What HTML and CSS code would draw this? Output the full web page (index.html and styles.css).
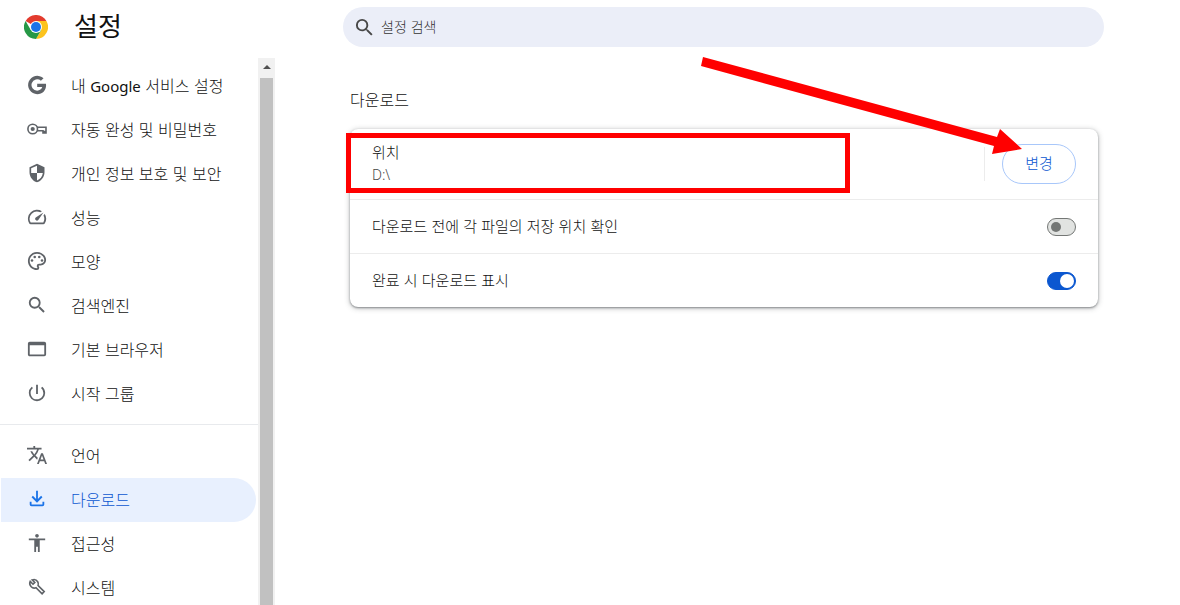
FILE: index.html
```html
<!DOCTYPE html>
<html lang="ko">
<head>
<meta charset="utf-8">
<title>설정</title>
<link rel="stylesheet" href="styles.css">
</head>
<body>
<div class="app">
  <aside class="sidebar">
    <header class="brand">
      <svg class="brand-logo" viewBox="0 0 48 48" aria-hidden="true">
        <path fill="#e33b2e" d="M24 24 3.2 12A24 24 0 0 1 44.8 12Z"/>
        <path fill="#fcc31e" d="M24 12H44.8A24 24 0 0 1 24 48L34.4 30Z"/>
        <path fill="#269846" d="M13.6 30 3.2 12A24 24 0 0 0 24 48L34.4 30Z"/>
        <circle cx="24" cy="24" r="12" fill="#fff"/>
        <circle cx="24" cy="24" r="10" fill="#1a73e8"/>
      </svg>
      <h1 class="brand-title">설정</h1>
    </header>
    <div class="menu-area">
      <nav class="menu">
        <a class="menu-item" href="#"><svg class="icon" viewBox="1 1 22 22"><path d="M21.8 10.5H12.2v3.8h5.6c-.7 2.4-2.8 3.9-5.6 3.9a6.2 6.2 0 1 1 4.1-10.800l2.900-2.800A10.1 10.1 0 1 0 12.2 22.1c5.8 0 9.8-4.1 9.8-9.8 0-.6-.1-1.2-.2-1.8z"/></svg><span>내 <span class="latin">Google</span> 서비스 설정</span></a>
        <a class="menu-item" href="#"><svg class="icon icon-outline" viewBox="0 0 20 20"><circle cx="5.7" cy="10" r="4.8"/><path d="M10 8.2H19V14H16V11.8H10M17.5 11.800V14"/><circle class="dot" cx="5.7" cy="10" r="2.100"/></svg><span>자동 완성 및 비밀번호</span></a>
        <a class="menu-item" href="#"><svg class="icon" viewBox="0 0 24 24"><path d="M12 1L3 5v6c0 5.55 3.84 10.74 9 12 5.16-1.26 9-6.45 9-12V5l-9-4zm0 10.99h7c-.53 4.12-3.28 7.79-7 8.94V12H5V6.3l7-3.11v8.8z"/></svg><span>개인 정보 보호 및 보안</span></a>
        <a class="menu-item" href="#"><svg class="icon" viewBox="1 1 22 22"><path d="M20.38 8.57l-1.23 1.85a8 8 0 0 1-.22 7.58H5.07A8 8 0 0 1 15.58 6.85l1.85-1.23A10 10 0 0 0 3.35 19a2 2 0 0 0 1.72 1h13.85a2 2 0 0 0 1.74-1 10 10 0 0 0-.27-10.44zm-9.79 6.84a2 2 0 0 0 2.83 0l5.66-8.49-8.49 5.66a2 2 0 0 0 0 2.83z"/></svg><span>성능</span></a>
        <a class="menu-item" href="#"><svg class="icon" viewBox="1 1 22 22"><path d="M12 22C6.49 22 2 17.51 2 12S6.49 2 12 2s10 4.04 10 9c0 3.31-2.69 6-6 6h-1.77c-.28 0-.5.22-.5.5 0 .12.05.23.13.33.41.47.64 1.06.64 1.67A2.5 2.5 0 0 1 12 22zm0-18c-4.41 0-8 3.59-8 8s3.59 8 8 8c.28 0 .5-.22.5-.5a.54.54 0 0 0-.14-.35c-.41-.46-.63-1.05-.63-1.65a2.5 2.5 0 0 1 2.5-2.5H16c2.21 0 4-1.79 4-4 0-3.86-3.59-7-8-7z"/><circle cx="6.5" cy="11.5" r="1.4"/><circle cx="9.5" cy="7.5" r="1.4"/><circle cx="14.5" cy="7.5" r="1.4"/><circle cx="17.5" cy="11.5" r="1.4"/></svg><span>모양</span></a>
        <a class="menu-item" href="#"><svg class="icon" viewBox="1 1 22 22"><path d="M15.5 14h-.79l-.28-.27A6.47 6.47 0 0 0 16 9.5 6.5 6.5 0 1 0 9.5 16c1.61 0 3.09-.59 4.23-1.57l.27.28v.79l5 4.99L20.49 19l-4.99-5zm-6 0C7.01 14 5 11.99 5 9.5S7.01 5 9.5 5 14 7.01 14 9.5 11.99 14 9.5 14z"/></svg><span>검색엔진</span></a>
        <a class="menu-item" href="#"><svg class="icon" viewBox="1 1 22 22"><path d="M20 4H4a2 2 0 0 0-2 2v12c0 1.1.9 2 2 2h16a2 2 0 0 0 2-2V6a2 2 0 0 0-2-2zm0 14H4V8h16v10z"/></svg><span>기본 브라우저</span></a>
        <a class="menu-item" href="#"><svg class="icon" viewBox="1 1 22 22"><path d="M13 3h-2v10h2V3zm4.83 2.17l-1.42 1.42A6.92 6.92 0 0 1 19 12c0 3.87-3.13 7-7 7A6.995 6.995 0 0 1 7.58 6.58L6.17 5.17A8.932 8.932 0 0 0 3 12a9 9 0 0 0 18 0c0-2.74-1.23-5.18-3.17-6.83z"/></svg><span>시작 그룹</span></a>
        <hr class="menu-divider">
        <a class="menu-item" href="#"><svg class="icon" viewBox="1 1 22 22"><path d="M12.87 15.07l-2.54-2.51.03-.03A17.52 17.52 0 0 0 14.07 6H17V4h-7V2H8v2H1v1.99h11.17C11.5 7.92 10.44 9.75 9 11.35 8.07 10.32 7.3 9.19 6.69 8h-2c.73 1.63 1.73 3.17 2.98 4.56l-5.09 5.02L4 19l5-5 3.11 3.11.76-2.04zM18.5 10h-2L12 22h2l1.12-3h4.75L21 22h2l-4.5-12zm-2.62 7l1.62-4.33L19.12 17h-3.24z"/></svg><span>언어</span></a>
        <a class="menu-item selected" href="#" aria-current="page"><svg class="icon" viewBox="1 1 22 22"><path d="M11 3h2v9l3.5-3.5L18 10l-6 6-6-6 1.5-1.5L11 12zM4 15h2v3h12v-3h2v3a2 2 0 0 1-2 2H6a2 2 0 0 1-2-2z"/></svg><span>다운로드</span></a>
        <a class="menu-item" href="#"><svg class="icon" viewBox="1 1 22 22"><path d="M12 2c1.1 0 2 .9 2 2s-.9 2-2 2-2-.9-2-2 .9-2 2-2zm9 7h-6v13h-2v-6h-2v6H9V9H3V7h18v2z"/></svg><span>접근성</span></a>
        <a class="menu-item" href="#"><svg class="icon icon-outline" viewBox="0 0 20 20"><path d="M3.2 4.4 6 7.2 7.8 5.4 5.2 2.900C7.200 2.200 9.500 2.800 10.700 4.700 11.500 6 11.500 7.300 11.100 8.500L17.200 14.600 15.100 16.800 9 10.700C7.500 11.300 5.500 11.100 4.200 9.800 2.700 8.300 2.400 6.200 3.200 4.400Z"/></svg><span>시스템</span></a>
      </nav>
      <div class="scrollbar" aria-hidden="true">
        <svg class="scroll-arrow" viewBox="0 0 8 4"><path d="M4 0 8 4H0z"/></svg>
        <div class="scroll-thumb"></div>
      </div>
    </div>
  </aside>
  <main class="content">
    <label class="search">
      <svg class="search-icon" viewBox="2 2 20 20" aria-hidden="true"><path d="M15.5 14h-.79l-.28-.27A6.47 6.47 0 0 0 16 9.5 6.5 6.5 0 1 0 9.5 16c1.61 0 3.09-.59 4.23-1.57l.27.28v.79l5 4.99L20.49 19l-4.99-5zm-6 0C7.01 14 5 11.99 5 9.5S7.01 5 9.5 5 14 7.01 14 9.5 11.99 14 9.5 14z"/></svg>
      <input class="search-input" type="search" placeholder="설정 검색" aria-label="설정 검색">
    </label>
    <section class="section">
      <h2 class="section-title">다운로드</h2>
      <div class="card">
        <div class="row row-location">
          <div class="location">
            <div class="location-title">위치</div>
            <div class="location-path">D:\</div>
          </div>
          <div class="row-action">
            <button class="change-button" type="button">변경</button>
          </div>
        </div>
        <div class="row">
          <label class="row-label" for="ask">다운로드 전에 각 파일의 저장 위치 확인</label>
          <input class="toggle" id="ask" type="checkbox">
        </div>
        <div class="row">
          <label class="row-label" for="show">완료 시 다운로드 표시</label>
          <input class="toggle" id="show" type="checkbox" checked>
        </div>
        <div class="highlight"></div>
        <svg class="pointer" viewBox="0 0 322 98" aria-hidden="true"><path d="M3 0 297 80 300 72 322 92 292 97 294 89 1 9z"/></svg>
      </div>
    </section>
  </main>
</div>
</body>
</html>
```

FILE: styles.css
```css
* {
  box-sizing: border-box;
}

body {
  margin: 0;
  background: #fff;
  color: #111;
  font-family: "Noto Sans CJK KR", "Noto Sans", sans-serif;
  font-size: 15px;
  font-weight: 300;
  line-height: 22px;
}

.app {
  display: flex;
  height: 100vh;
  overflow: hidden;
}

.sidebar {
  display: flex;
  flex: 0 0 275px;
  flex-direction: column;
}

.brand {
  display: flex;
  align-items: center;
  gap: 26px;
  height: 58px;
  padding: 0 24px 4px;
}

.brand-logo {
  width: 24px;
  height: 24px;
}

.brand-title {
  margin: 0;
  padding-bottom: 4px;
  font-size: 26px;
  font-weight: 400;
  line-height: 36px;
}

.menu-area {
  display: flex;
  flex: 1;
  min-height: 0;
}

.menu {
  flex: 1;
  padding-top: 6px;
  overflow: hidden;
}

.menu-item {
  display: flex;
  align-items: center;
  gap: 24px;
  height: 44px;
  margin: 0 2px 0 1px;
  padding: 0 0 2px 26px;
  border-radius: 0 22px 22px 0;
  color: #111;
  font-size: 16px;
  text-decoration: none;
}

.latin {
  font-family: "Noto Sans", sans-serif;
  font-size: 15px;
  font-weight: 400;
}

.menu-item.selected {
  background: #e8f0fe;
  color: #0b57d0;
}

.icon {
  width: 20px;
  height: 20px;
  fill: #5f6368;
}

.icon-outline {
  fill: none;
  stroke: #5f6368;
  stroke-width: 1.6;
}

.icon-outline .dot {
  fill: #5f6368;
  stroke: none;
}

.selected .icon {
  fill: #1a73e8;
}

.menu-divider {
  height: 1px;
  margin: 8px 0 9px;
  border: 0;
  background: #e8eaed;
}

.scrollbar {
  display: flex;
  flex: 0 0 17px;
  flex-direction: column;
  align-items: center;
  background: #f1f1f1;
}

.scroll-arrow {
  width: 8px;
  height: 4px;
  margin: 7px 0 9px;
  fill: #505050;
}

.scroll-thumb {
  flex: 1;
  width: 13px;
  background: #c1c1c1;
}

.content {
  flex: 1;
  padding: 7px 76px 0 68px;
}

.search {
  display: flex;
  align-items: center;
  gap: 7px;
  height: 40px;
  padding: 0 12px;
  border-radius: 20px;
  background: #ebeef8;
}

.search-icon {
  width: 19px;
  height: 19px;
  fill: #474747;
}

.search-input {
  flex: 1;
  min-width: 0;
  padding: 0 0 2px;
  border: 0;
  outline: 0;
  background: transparent;
  color: #333;
  font: inherit;
  font-size: 14px;
}

.search-input::placeholder {
  color: #333;
}

.section {
  padding: 41px 6px 0 7px;
}

.section-title {
  margin: 0 0 19px;
  font-size: 16px;
  font-weight: 300;
  line-height: 22px;
}

.card {
  position: relative;
  border-radius: 8px;
  box-shadow: 0 1px 2px rgba(60, 64, 67, .5), 0 1px 5px 1px rgba(60, 64, 67, .25);
}

.row {
  display: flex;
  align-items: center;
  justify-content: space-between;
  min-height: 54px;
  padding: 0 22px;
  border-top: 1px solid #ececec;
}

.row-location {
  min-height: 70px;
  border-top: 0;
}

.row-label {
  padding-bottom: 2px;
}

.location {
  padding-bottom: 2px;
}

.location-title {
  line-height: 24px;
}

.location-path {
  color: #474747;
  font-family: "Noto Sans", sans-serif;
  font-size: 14px;
}

.row-action {
  display: flex;
  align-items: center;
  height: 34px;
  padding-left: 17px;
  border-left: 1px solid #ececec;
}

.change-button {
  width: 74px;
  height: 40px;
  padding: 0 0 2px;
  border: 1px solid #a8c7fa;
  border-radius: 20px;
  background: #fff;
  color: #0b57d0;
  font: inherit;
}

.toggle {
  display: flex;
  align-items: center;
  width: 29px;
  height: 18px;
  margin: 0;
  padding: 0 3px;
  border: 1px solid #747775;
  border-radius: 9px;
  background: #e1e3e1;
  appearance: none;
}

.toggle::before {
  width: 10px;
  height: 10px;
  border-radius: 50%;
  background: #747775;
  content: "";
}

.toggle:checked {
  justify-content: flex-end;
  padding: 0 1px;
  border-color: #0b57d0;
  background: #0b57d0;
}

.toggle:checked::before {
  width: 14px;
  height: 14px;
  background: #fff;
}

.highlight {
  position: absolute;
  top: 4px;
  left: -4px;
  width: 504px;
  height: 60px;
  border: 5px solid #f00;
}

.pointer {
  position: absolute;
  top: -72px;
  right: 76px;
  width: 322px;
  height: 98px;
  fill: #f00;
  pointer-events: none;
}
```
